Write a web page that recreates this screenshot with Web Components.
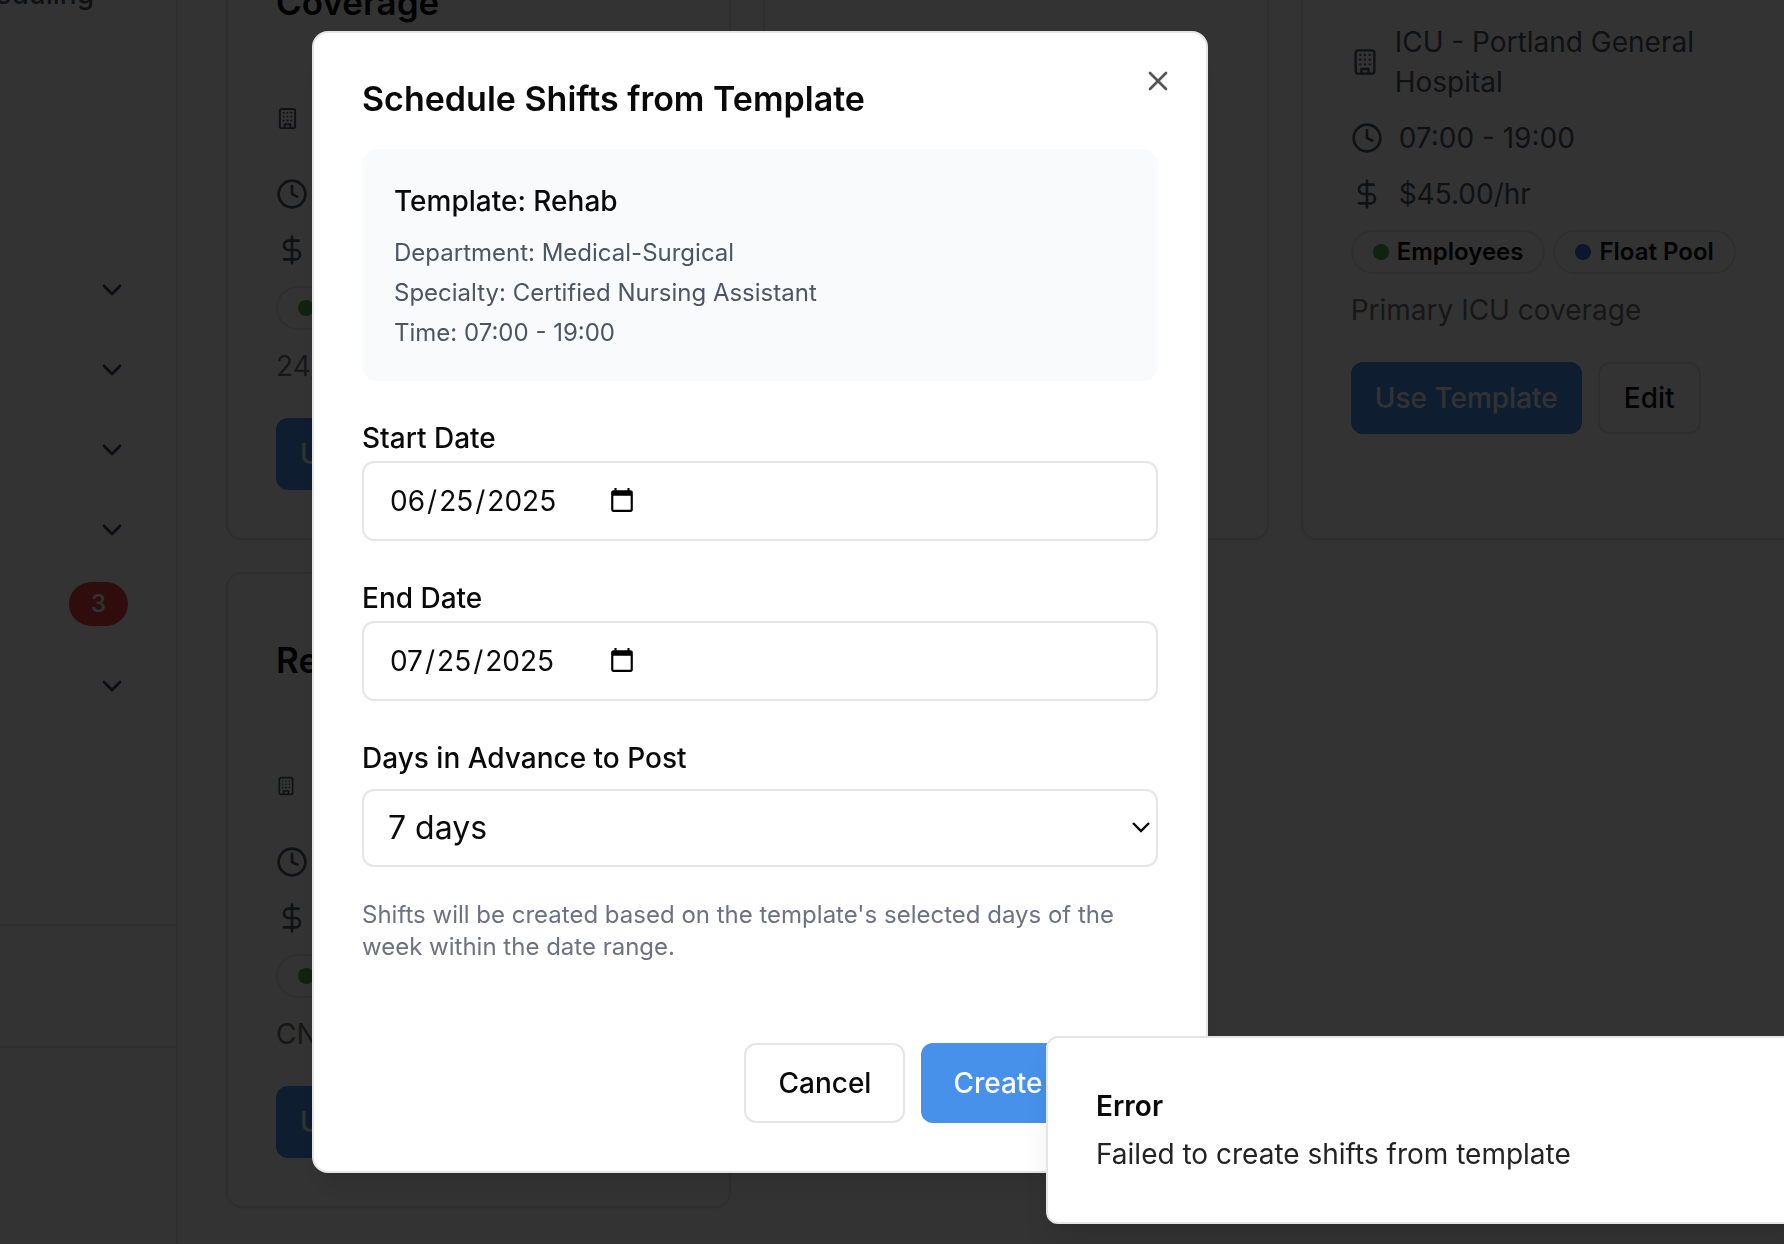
<!DOCTYPE html>
<html lang="en">
<head>
<meta charset="utf-8">
<title>Shift Templates</title>
<style>
  body { margin: 0; height: 100vh; overflow: hidden; background: #fff; color: #0a0a0a; font-family: Inter, "Liberation Sans", sans-serif; font-size: 28px; line-height: 40px; }
</style>
</head>
<body>
<shift-app></shift-app>
<script>
const BASE = `
  *, *::before, *::after { box-sizing: border-box; }
  h2, h3, p { margin: 0; }
  button, input, select { font: inherit; color: inherit; margin: 0; }
  button { cursor: pointer; }
`;

class BaseElement extends HTMLElement {
  connectedCallback() {
    if (this.shadowRoot) return;
    const root = this.attachShadow({ mode: 'open' });
    root.innerHTML = `<style>${BASE}${this.styles()}</style>${this.markup()}`;
  }
  styles() { return ''; }
  markup() { return '<slot></slot>'; }
}

const ICONS = {
  building: '<rect x="4" y="2" width="16" height="20" rx="2"/><path d="M9 22v-4h6v4M8 6h.01M16 6h.01M12 6h.01M12 10h.01M12 14h.01M16 10h.01M16 14h.01M8 10h.01M8 14h.01"/>',
  clock: '<circle cx="12" cy="12" r="10"/><path d="M12 6v6l4 2"/>',
  dollar: '<path d="M12 2v20M17 5H9.5a3.5 3.5 0 0 0 0 7h5a3.5 3.5 0 0 1 0 7H6"/>',
  chevron: '<path d="m6 9 6 6 6-6"/>',
  close: '<path d="M18 6 6 18M6 6l12 12"/>'
};

customElements.define('line-icon', class extends BaseElement {
  styles() {
    return `:host { display: block; flex: none; width: 32px; } svg { display: block; width: 100%; height: auto; }`;
  }
  markup() {
    return `<svg viewBox="0 0 24 24" fill="none" stroke="currentColor" stroke-width="2" stroke-linecap="round" stroke-linejoin="round" aria-hidden="true">${ICONS[this.getAttribute('name')]}</svg>`;
  }
});

customElements.define('ui-button', class extends BaseElement {
  styles() {
    return `
      :host { display: block; }
      button { display: block; height: 72px; padding: 0 24px; border: 0; border-radius: 12px; background: #4791ea; color: #fafafa; font-weight: 500; white-space: nowrap; }
      :host([size="large"]) button { height: 80px; padding: 0 32px; }
      :host([outline]) button { background: #fff; border: 2px solid #e5e5e5; color: #0a0a0a; }
    `;
  }
  markup() { return `<button type="button"><slot></slot></button>`; }
});

customElements.define('staff-chip', class extends BaseElement {
  styles() {
    return `
      :host { display: flex; align-items: center; gap: 8px; min-width: 120px; min-height: 44px; padding: 4px 20px; border: 2px solid #e5e5e5; border-radius: 22px; box-sizing: border-box; font-size: 24px; line-height: 32px; font-weight: 600; white-space: nowrap; }
      i { width: 16px; height: 16px; border-radius: 50%; background: #4caf50; }
      :host([pool]) i { background: #3f6fe0; }
    `;
  }
  markup() { return `<i></i><slot></slot>`; }
});

customElements.define('template-card', class extends BaseElement {
  styles() {
    return `
      :host { display: flex; flex-direction: column; padding: 48px; border: 2px solid #e5e5e5; border-radius: 16px; background: #fff; box-shadow: 0 2px 4px rgba(0,0,0,.05); min-width: 0; }
      h3 { display: flex; flex-direction: column; justify-content: center; min-height: var(--head, 56px); margin-bottom: 48px; font-size: 35px; line-height: 56px; font-weight: 600; }
      .rows { display: flex; flex-direction: column; gap: 16px; color: #4b5563; }
      .row { display: flex; align-items: center; gap: 16px; min-height: 40px; }
      .place { min-height: 80px; }
      .place line-icon { width: var(--pin, 28px); }
      .chips { display: flex; gap: 8px; margin-top: 16px; }
      p { margin-top: 16px; color: #737373; }
      .actions { display: flex; gap: 16px; margin-top: 32px; }
    `;
  }
  markup() {
    if (this.hasAttribute('blank')) return '';
    return `
      <h3><slot name="title"></slot></h3>
      <div class="rows">
        <div class="row place"><line-icon name="building"></line-icon><slot name="place"></slot></div>
        <div class="row"><line-icon name="clock"></line-icon><slot name="time"></slot></div>
        <div class="row"><line-icon name="dollar"></line-icon><slot name="rate"></slot></div>
      </div>
      <div class="chips"><slot name="chip"></slot></div>
      <p><slot name="note"></slot></p>
      <div class="actions"><ui-button>Use Template</ui-button><slot name="action"></slot></div>
    `;
  }
});

customElements.define('side-bar', class extends BaseElement {
  styles() {
    return `
      :host { display: flex; flex-direction: column; flex: none; box-sizing: border-box; width: 178px; border-right: 2px solid #e5e5e5; background: #fff; color: #374151; overflow: hidden; }
      .top { display: flex; justify-content: flex-end; height: 254px; padding-right: 82px; }
      .top a { margin-top: -26px; height: 40px; color: #4b5563; text-decoration: none; font-weight: 500; }
      nav { display: flex; flex-direction: column; gap: 8px; height: 670px; }
      nav button { display: flex; align-items: center; justify-content: flex-end; height: 72px; padding: 0 48px; border: 0; background: none; }
      .count { display: flex; justify-content: flex-end; height: 68px; padding: 8px 48px 0; text-decoration: none; }
      .count span { height: 44px; padding: 6px 22px; border-radius: 22px; background: #ef4444; color: #fafafa; font-size: 24px; line-height: 32px; font-weight: 500; }
      .user { height: 124px; border: solid #e5e5e5; border-width: 2px 0; }
    `;
  }
  markup() {
    const row = '<button type="button" aria-label="Expand section"><line-icon name="chevron"></line-icon></button>';
    return `
      <div class="top"><a href="#">Scheduling</a></div>
      <nav>${row.repeat(4)}<a class="count" href="#"><span>3</span></a>${row}</nav>
      <div class="user"></div>
    `;
  }
});

customElements.define('date-field', class extends BaseElement {
  styles() {
    return `
      :host { display: block; }
      label { display: block; padding-top: 2px; line-height: 46px; font-weight: 500; }
      input { display: flex; width: 100%; height: 80px; padding: 0 24px; border: 2px solid #e5e5e5; border-radius: 12px; background: #fff; outline: 0; }
      input::-webkit-datetime-edit { padding: 0; flex: none; }
      input::-webkit-datetime-edit-text { padding: 0; }
      input::-webkit-datetime-edit-month-field, input::-webkit-datetime-edit-day-field, input::-webkit-datetime-edit-year-field { padding: 0 2px; }
      input::-webkit-calendar-picker-indicator { width: 28px; height: 28px; padding: 0; margin-left: 10px; background-size: contain; }
    `;
  }
  markup() {
    return `<label for="d">${this.getAttribute('label')}</label><input id="d" type="date" value="${this.getAttribute('value')}">`;
  }
});

customElements.define('days-field', class extends BaseElement {
  styles() {
    return `
      :host { display: block; }
      label { display: block; padding-top: 2px; line-height: 46px; margin-bottom: 8px; font-weight: 500; }
      .box { display: grid; align-items: center; }
      .box > * { grid-area: 1 / 1; }
      select { appearance: none; width: 100%; height: 78px; padding: 0 24px; border: 2px solid #e5e5e5; border-radius: 12px; background: #fff; font-size: 32px; outline: 0; }
      svg { justify-self: end; width: 20px; height: 12px; margin-right: 7px; pointer-events: none; }
    `;
  }
  markup() {
    return `<label for="s">Days in Advance to Post</label>
      <div class="box"><select id="s"><option>7 days</option></select>
      <svg viewBox="0 0 20 12" fill="none" stroke="#0a0a0a" stroke-width="2.4" aria-hidden="true"><path d="m2 1 8 8 8-8"/></svg></div>`;
  }
});

customElements.define('schedule-dialog', class extends BaseElement {
  styles() {
    return `
      :host { position: fixed; z-index: 2; left: 312px; top: 31px; box-sizing: border-box; width: 896px; padding: 48px; border: 2px solid #e5e5e5; border-radius: 16px; background: #fff; box-shadow: 0 20px 30px -6px rgba(0,0,0,.1), 0 8px 12px -8px rgba(0,0,0,.1); display: flex; flex-direction: column; gap: 32px; }
      h2 { font-size: 34px; line-height: 36px; font-weight: 600; }
      .close { position: absolute; top: 32px; right: 32px; padding: 0; border: 0; background: none; color: #545454; }
      .info { display: flex; flex-direction: column; gap: 8px; padding: 32px; border-radius: 16px; background: #f9fafb; color: #4b5563; font-size: 24px; line-height: 32px; }
      .info h3 { margin-bottom: 8px; color: #0a0a0a; font-size: 28px; line-height: 40px; font-weight: 500; }
      .hint { color: #6b7280; font-size: 24px; line-height: 32px; }
      footer { display: flex; justify-content: flex-end; gap: 16px; margin-top: 48px; }
    `;
  }
  markup() {
    return `
      <h2>Schedule Shifts from Template</h2>
      <button class="close" type="button" aria-label="Close"><line-icon name="close"></line-icon></button>
      <section class="info">
        <h3>Template: Rehab</h3>
        <p>Department: Medical-Surgical</p>
        <p>Specialty: Certified Nursing Assistant</p>
        <p>Time: 07:00 - 19:00</p>
      </section>
      <date-field label="Start Date" value="2025-06-25"></date-field>
      <date-field label="End Date" value="2025-07-25"></date-field>
      <days-field></days-field>
      <p class="hint">Shifts will be created based on the template's selected days of the week within the date range.</p>
      <footer><ui-button size="large" outline>Cancel</ui-button><ui-button size="large">Create Shifts</ui-button></footer>
    `;
  }
});

customElements.define('toast-message', class extends BaseElement {
  styles() {
    return `
      :host { position: fixed; z-index: 3; right: -38px; bottom: 20px; box-sizing: border-box; width: 776px; padding: 48px; border: 2px solid #e5e5e5; border-radius: 12px; background: #fff; box-shadow: 0 20px 30px -6px rgba(0,0,0,.1), 0 8px 12px -8px rgba(0,0,0,.1); display: flex; flex-direction: column; gap: 8px; }
      strong { font-weight: 600; }
      p { color: #232323; }
    `;
  }
  markup() { return `<strong><slot name="title"></slot></strong><p><slot></slot></p>`; }
});

customElements.define('shift-app', class extends BaseElement {
  styles() {
    return `
      :host { display: flex; height: 100vh; overflow: hidden; }
      main { flex: 1; min-width: 0; padding-left: 48px; margin-right: -22px; }
      .grid { display: grid; grid-template-columns: repeat(3, minmax(0, 1fr)); gap: 32px; margin-top: -132px; }
      .shade { position: fixed; z-index: 1; inset: 0; background: rgba(0,0,0,.8); }
    `;
  }
  markup() {
    return `
      <side-bar></side-bar>
      <main><div class="grid">
        <template-card style="--pin: 23px; --head: 112px">
          <span slot="title"><br>Coverage</span>
          <staff-chip slot="chip"></staff-chip>
          <span slot="note">24/7</span>
        </template-card>
        <template-card blank></template-card>
        <template-card>
          <span slot="place">ICU - Portland General Hospital</span>
          <span slot="time">07:00 - 19:00</span>
          <span slot="rate">$45.00/hr</span>
          <staff-chip slot="chip">Employees</staff-chip>
          <staff-chip slot="chip" pool>Float Pool</staff-chip>
          <span slot="note">Primary ICU coverage</span>
          <ui-button slot="action" outline>Edit</ui-button>
        </template-card>
        <template-card style="--pin: 20px; --head: 76px">
          <span slot="title">Rehab</span>
          <staff-chip slot="chip"></staff-chip>
          <span slot="note">CNA</span>
        </template-card>
      </div></main>
      <div class="shade"></div>
      <schedule-dialog role="dialog" aria-modal="true" aria-label="Schedule Shifts from Template"></schedule-dialog>
      <toast-message role="status"><span slot="title">Error</span>Failed to create shifts from template</toast-message>
    `;
  }
});
</script>
</body>
</html>
